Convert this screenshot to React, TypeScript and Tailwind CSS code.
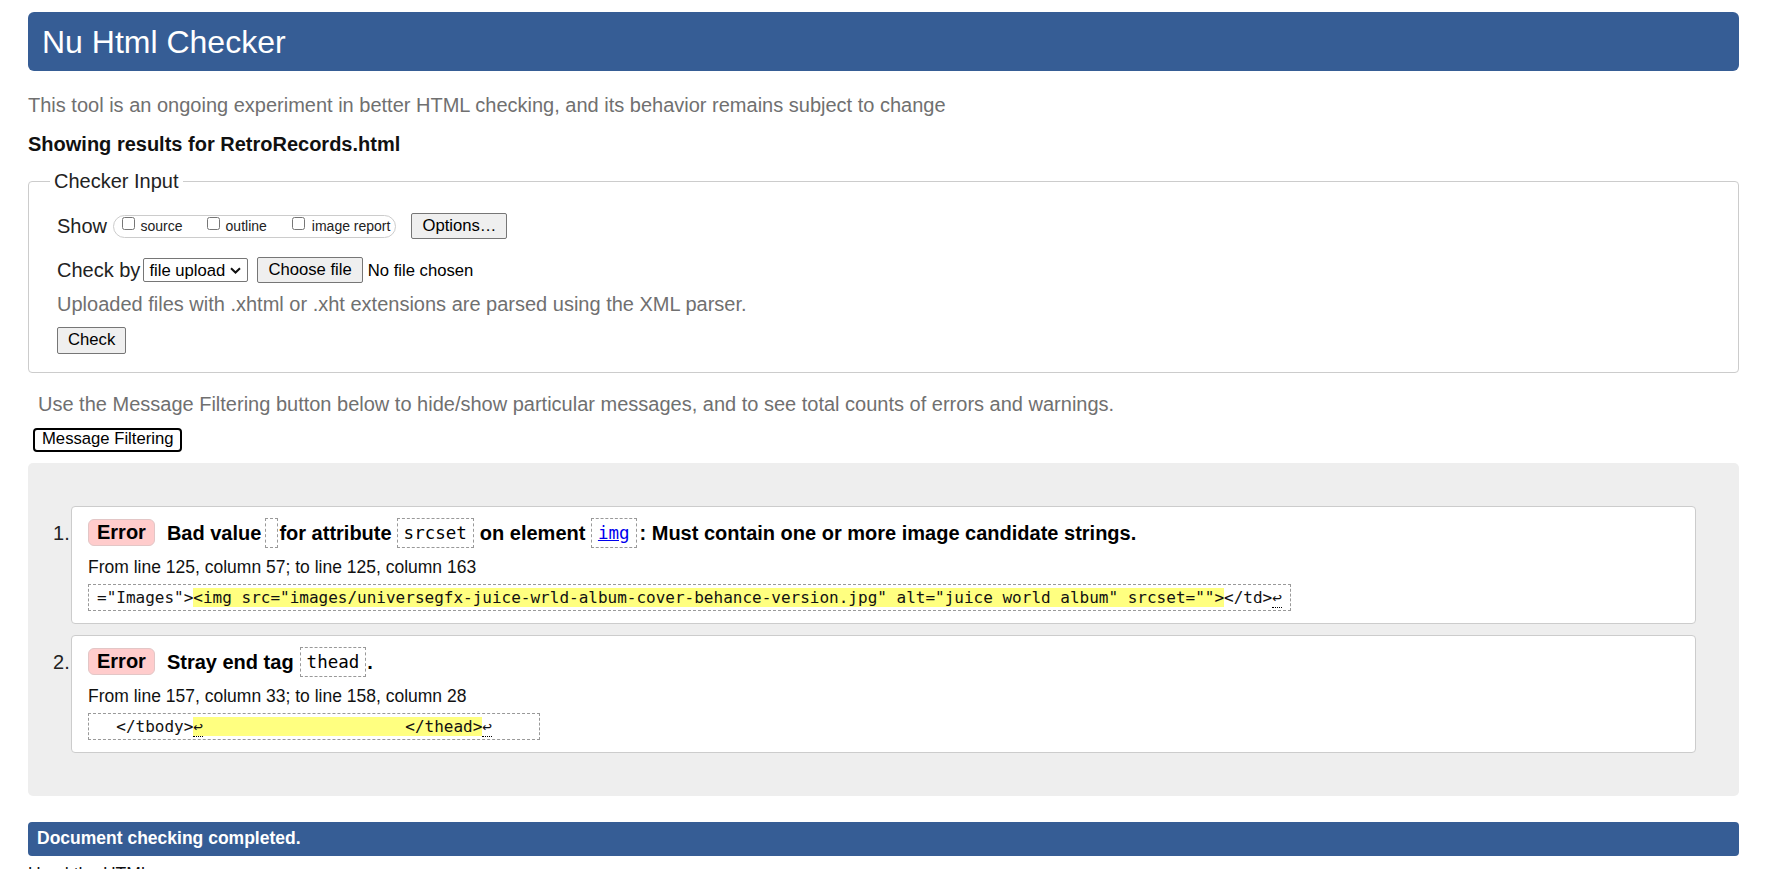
const sans = "font-['Liberation_Sans',Arial,sans-serif]";
const mono = "font-['DejaVu_Sans_Mono','Liberation_Mono',monospace]";

const btn =
  "h-[26px] px-[9px] border border-[#767676] bg-[#efefef] rounded-[2px] text-[16.67px] text-black leading-none";

const Code: React.FC<{ children?: React.ReactNode; className?: string }> = ({
  children,
  className = "px-[6px]",
}) => (
  <span
    className={`${mono} ${className} inline-block h-[30px] align-middle border border-dashed border-[#999] leading-[28px] text-[17.5px] font-normal whitespace-pre`}
  >
    {children}
  </span>
);

const Ret = () => <span className="border-b border-dotted border-black">↩</span>;

const Mark: React.FC<{ children: React.ReactNode }> = ({ children }) => (
  <span className="bg-[#ffff80]">{children}</span>
);

const Message: React.FC<{
  n: number;
  heading: React.ReactNode;
  location: string;
  extract: React.ReactNode;
}> = ({ n, heading, location, extract }) => (
  <li className="flex">
    <span className="w-[18px] mt-[12px] leading-[30px] text-[20px] text-[#222]">{n}.</span>
    <div className="flex-1 bg-white border border-[#ccc] rounded-[4px] pl-[16px] pr-[16px] pt-[11px] pb-[12px]">
      <div className="flex items-center h-[30px] text-[20px] font-bold text-black">
        <span className="h-[27px] leading-[25px] px-[8px] bg-[#ffcccc] border border-[#e3c6c6] rounded-[6px]">
          Error
        </span>
        {heading}
      </div>
      <p className="mt-[8px] leading-[22px] text-[17.5px] text-[#111]">{location}</p>
      <div
        className={`${mono} mt-[6px] w-fit border border-dashed border-[#999] px-[8px] leading-[25px] text-[16px] text-[#111] whitespace-pre`}
      >
        {extract}
      </div>
    </div>
  </li>
);

export default function App() {
  return (
    <div className={`${sans} min-h-screen bg-white pl-[28px] pr-[33px] pt-[12px] text-[#222]`}>
      <header className="h-[59px] rounded-[6px] bg-[#365d95] pl-[14px] flex items-center">
        <h1 className="text-white text-[32px] font-normal">Nu Html Checker</h1>
      </header>

      <p className="mt-[22px] leading-[24px] text-[20px] text-[#707070]">
        This tool is an ongoing experiment in better HTML checking, and its behavior remains subject to change
      </p>
      <p className="mt-[14.5px] leading-[24px] text-[20px] font-bold text-[#111]">
        Showing results for RetroRecords.html
      </p>

      <fieldset className="mt-[13.5px] border border-[#ccc] rounded-[4px] pl-[21px] pr-[21px] pb-[18px]">
        <legend className="px-[4px] leading-[24px] text-[20px] text-[#222]">Checker Input</legend>
        <div className="pl-[7px]">
          <div className="mt-[20px] flex items-center h-[26px]">
            <span className="text-[20px]">Show</span>
            <div className="ml-[5.5px] h-[23px] flex items-center rounded-full border border-[#ccc] pl-[8px] pr-[5px] text-[14px] text-[#222]">
              <input type="checkbox" className="self-start mt-[1px] w-[13px] h-[13px] m-0" />
              <span className="ml-[6px]">source</span>
              <input type="checkbox" className="self-start mt-[1px] ml-[24px] w-[13px] h-[13px]" />
              <span className="ml-[6px]">outline</span>
              <input type="checkbox" className="self-start mt-[1px] ml-[25px] w-[13px] h-[13px]" />
              <span className="ml-[7px]">image report</span>
            </div>
            <button className={`${btn} ml-[15px] px-[10px]`}>Options…</button>
          </div>

          <div className="mt-[18px] flex items-center h-[26px]">
            <span className="text-[20px]">Check by</span>
            <button className="ml-[3px] w-[105px] h-[24px] border border-[#767676] rounded-[2px] bg-white flex items-center justify-between pl-[5px] pr-[6px] text-[16.67px] text-black">
              <span>file upload</span>
              <svg width="11" height="7" viewBox="0 0 11 7" fill="none">
                <path d="M1 1.2 L5.5 5.5 L10 1.2" stroke="#111" strokeWidth="2" />
              </svg>
            </button>
            <button className={`${btn} ml-[9px] px-[10px]`}>Choose file</button>
            <span className="ml-[5px] text-[16.67px] text-black">No file chosen</span>
          </div>

          <p className="mt-[9px] leading-[24px] text-[20px] text-[#707070]">
            Uploaded files with .xhtml or .xht extensions are parsed using the XML parser.
          </p>
          <button className={`${btn} mt-[11px] h-[27px] px-[10px]`}>Check</button>
        </div>
      </fieldset>

      <p className="mt-[18.5px] pl-[10px] leading-[24px] text-[20px] text-[#707070]">
        Use the Message Filtering button below to hide/show particular messages, and to see total counts of errors and warnings.
      </p>
      <button className="ml-[5px] mt-[12px] h-[24px] border-2 border-black rounded-[4px] bg-white px-[7px] text-[16.67px] text-black leading-none">
        Message Filtering
      </button>

      <div className="mt-[11px] bg-[#eeeeee] rounded-[5px] pl-[25px] pr-[43px] pt-[43px] pb-[43px]">
        <ol className="flex flex-col gap-[11px]">
          <Message
            n={1}
            heading={
              <>
                <span className="ml-[12px]">Bad value</span>
                <span className="ml-[4px] flex">
                  <Code className="w-[13px] px-0" />
                </span>
                <span className="ml-[1px]">for attribute</span>
                <span className="ml-[5px] flex">
                  <Code>srcset</Code>
                </span>
                <span className="ml-[6px]">on element</span>
                <span className="ml-[5.5px] flex">
                  <Code>
                    <a href="#" className="text-[#0000ee] underline">
                      img
                    </a>
                  </Code>
                </span>
                <span className="ml-[3px]">: Must contain one or more image candidate strings.</span>
              </>
            }
            location="From line 125, column 57; to line 125, column 163"
            extract={
              <>
                {'="Images">'}
                <Mark>
                  {
                    '<img src="images/universegfx-juice-wrld-album-cover-behance-version.jpg" alt="juice world album" srcset="">'
                  }
                </Mark>
                {"</td>"}
                <Ret />
              </>
            }
          />
          <Message
            n={2}
            heading={
              <>
                <span className="ml-[12px]">Stray end tag</span>
                <span className="ml-[6px] flex">
                  <Code>thead</Code>
                </span>
                <span className="ml-[1px]">.</span>
              </>
            }
            location="From line 157, column 33; to line 158, column 28"
            extract={
              <>
                {"  </tbody>"}
                <Mark>
                  <Ret />
                  {"                     </thead>"}
                </Mark>
                <Ret />
                {"    "}
              </>
            }
          />
        </ol>
      </div>

      <div className="mt-[26px] h-[34px] rounded-[4px] bg-[#365d95] pl-[9px] flex items-center">
        <p className="text-white font-bold text-[17.5px]">Document checking completed.</p>
      </div>
      <p className="mt-[6px] leading-[24px] text-[17.5px] text-[#111]">Used the HTML parser.</p>
    </div>
  );
}
